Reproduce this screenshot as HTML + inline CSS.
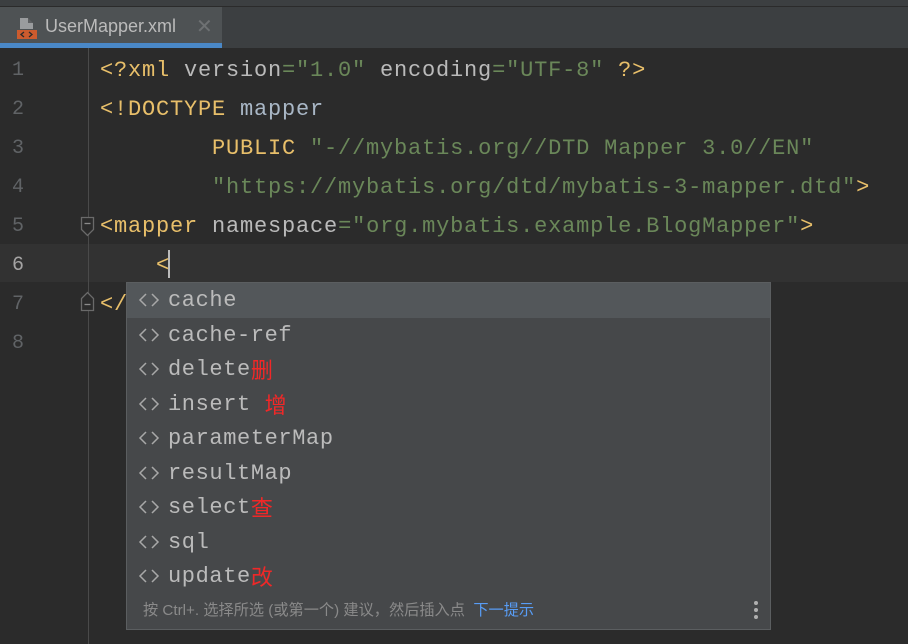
<!DOCTYPE html>
<html><head><meta charset="utf-8"><style>
*{margin:0;padding:0;box-sizing:border-box}
body{width:908px;height:644px;background:#2b2b2b;overflow:hidden;position:relative;font-family:"Liberation Mono",monospace}
.top{position:absolute;left:0;top:0;width:908px;height:6px;background:#3c3f41}
.sep{position:absolute;left:0;top:6px;width:908px;height:1px;background:#2b2b2b}
.bar{position:absolute;left:0;top:7px;width:908px;height:41px;background:#3c3f41}
.tab{position:absolute;left:0;top:7px;width:222px;height:41px;background:#4e5254}
.tab .ul{position:absolute;left:0;bottom:0;width:222px;height:5px;background:#4a88c7}
.tab .t{position:absolute;left:45px;top:9px;font:18px "Liberation Sans",sans-serif;color:#bbbbbb}
.tab .x{position:absolute;left:196px;top:7px;font:20px "Liberation Sans",sans-serif;color:#6e7173}
.guide{position:absolute;left:88px;top:48px;width:1px;height:596px;background:#4a4a4a}
.cur{position:absolute;left:0;top:244px;width:908px;height:38px;background:#323232}
.ln{position:absolute;left:8px;width:20px;font-size:20px;line-height:24px;color:#606366;text-align:center}
.code{position:absolute;left:100px;font-size:22px;line-height:26px;letter-spacing:0.8px;white-space:pre;color:#a9b7c6}
.tg{color:#e8bf6a}.at{color:#bababa}.st{color:#6a8759}
.pop{position:absolute;left:126px;top:282px;width:645px;height:348px;background:#46484a;border:1px solid #5b5e60}
.it{position:absolute;left:0;width:643px;height:35px;font-size:22px;line-height:35px;letter-spacing:0.6px;color:#bbbbbb;white-space:pre}
.it svg{position:absolute;left:11px;top:9px}
.it .w{position:absolute;left:41px;top:0;height:35px}
.it .zh{color:#f02828;font-family:"Noto Sans CJK SC",sans-serif;font-size:22px;letter-spacing:0;line-height:35px;vertical-align:top}
.foot{position:absolute;left:16px;top:318px;font:15.2px/20px "Liberation Sans","Noto Sans CJK SC",sans-serif;color:#8a8a8a;white-space:nowrap}
.foot b{font-weight:normal;color:#589df6}
.dots{position:absolute;right:12px;top:318px;width:4px}
.dots i{display:block;width:4px;height:4px;border-radius:2px;background:#b0b0b0;margin-bottom:3px}
</style></head><body>
<div class="top"></div><div class="sep"></div><div class="bar"></div>
<div class="tab">
<svg style="position:absolute;left:14px;top:10px" width="24" height="24"><path d="M6 1h8v5h5v6H6z" fill="#9a9c9e"/><path d="M14 1l5 5h-5z" fill="#5e6062"/><rect x="3" y="13" width="20" height="9" fill="#cc5b2e"/><path d="M10 15l-3 2.5 3 2.5M15 15l3 2.5-3 2.5" stroke="#2b2b2b" stroke-width="1.3" fill="none"/></svg>
<span class="t">UserMapper.xml</span><span class="x">✕</span><div class="ul"></div></div>
<div class="cur"></div>
<div class="guide"></div>
<div class="ln" style="top:59px">1</div>
<div class="ln" style="top:98px">2</div>
<div class="ln" style="top:137px">3</div>
<div class="ln" style="top:176px">4</div>
<div class="ln" style="top:215px">5</div>
<div class="ln" style="top:254px;color:#a4a3a3">6</div>
<div class="ln" style="top:293px">7</div>
<div class="ln" style="top:332px">8</div>
<svg style="position:absolute;left:80px;top:216px" width="16" height="22"><path d="M1.5 1.5h12v12l-6 6-6-6z" fill="#2b2b2b" stroke="#6a6a6a" stroke-width="1.3"/><path d="M4.5 7.5h6" stroke="#8a8a8a" stroke-width="1.3"/></svg>
<svg style="position:absolute;left:80px;top:290px" width="16" height="22"><path d="M1.5 20.5v-12l6-6 6 6v12z" fill="#2b2b2b" stroke="#6a6a6a" stroke-width="1.3"/><path d="M4.5 14.5h6" stroke="#8a8a8a" stroke-width="1.3"/></svg>
<div class="code" style="top:58px"><span class="tg">&lt;?xml </span><span class="at">version</span><span class="st">="1.0" </span><span class="at">encoding</span><span class="st">="UTF-8" </span><span class="tg">?&gt;</span></div>
<div class="code" style="top:97px"><span class="tg">&lt;!DOCTYPE </span>mapper</div>
<div class="code" style="top:136px">        <span class="tg">PUBLIC </span><span class="st">"-//mybatis.org//DTD Mapper 3.0//EN"</span></div>
<div class="code" style="top:175px">        <span class="st">"https://mybatis.org/dtd/mybatis-3-mapper.dtd"</span><span class="tg">&gt;</span></div>
<div class="code" style="top:214px"><span class="tg">&lt;mapper </span><span class="at">namespace</span><span class="st">="org.mybatis.example.BlogMapper"</span><span class="tg">&gt;</span></div>
<div class="code" style="top:253px">    <span class="tg">&lt;</span></div>
<div style="position:absolute;left:168px;top:250px;width:2px;height:28px;background:#bbbbbb"></div>
<div class="code" style="top:292px"><span class="tg">&lt;/</span></div>
<div class="pop">
<div class="it" style="top:0;background:#53575a"><svg width="22" height="16"><path d="M8 2L2 8l6 6M14 2l6 6-6 6" stroke="#a8a8a8" stroke-width="1.5" fill="none"/></svg><span class="w">cache</span></div>
<div class="it" style="top:35px"><svg width="22" height="16"><path d="M8 2L2 8l6 6M14 2l6 6-6 6" stroke="#a8a8a8" stroke-width="1.5" fill="none"/></svg><span class="w">cache-ref</span></div>
<div class="it" style="top:69px"><svg width="22" height="16"><path d="M8 2L2 8l6 6M14 2l6 6-6 6" stroke="#a8a8a8" stroke-width="1.5" fill="none"/></svg><span class="w">delete<span class="zh">删</span></span></div>
<div class="it" style="top:104px"><svg width="22" height="16"><path d="M8 2L2 8l6 6M14 2l6 6-6 6" stroke="#a8a8a8" stroke-width="1.5" fill="none"/></svg><span class="w">insert <span class="zh">增</span></span></div>
<div class="it" style="top:138px"><svg width="22" height="16"><path d="M8 2L2 8l6 6M14 2l6 6-6 6" stroke="#a8a8a8" stroke-width="1.5" fill="none"/></svg><span class="w">parameterMap</span></div>
<div class="it" style="top:173px"><svg width="22" height="16"><path d="M8 2L2 8l6 6M14 2l6 6-6 6" stroke="#a8a8a8" stroke-width="1.5" fill="none"/></svg><span class="w">resultMap</span></div>
<div class="it" style="top:207px"><svg width="22" height="16"><path d="M8 2L2 8l6 6M14 2l6 6-6 6" stroke="#a8a8a8" stroke-width="1.5" fill="none"/></svg><span class="w">select<span class="zh">查</span></span></div>
<div class="it" style="top:242px"><svg width="22" height="16"><path d="M8 2L2 8l6 6M14 2l6 6-6 6" stroke="#a8a8a8" stroke-width="1.5" fill="none"/></svg><span class="w">sql</span></div>
<div class="it" style="top:276px"><svg width="22" height="16"><path d="M8 2L2 8l6 6M14 2l6 6-6 6" stroke="#a8a8a8" stroke-width="1.5" fill="none"/></svg><span class="w">update<span class="zh">改</span></span></div>
<div class="foot">按 Ctrl+. 选择所选 (或第一个) 建议，然后插入点 &nbsp;<b>下一提示</b></div>
<div class="dots"><i></i><i></i><i></i></div>
</div>
</body></html>
